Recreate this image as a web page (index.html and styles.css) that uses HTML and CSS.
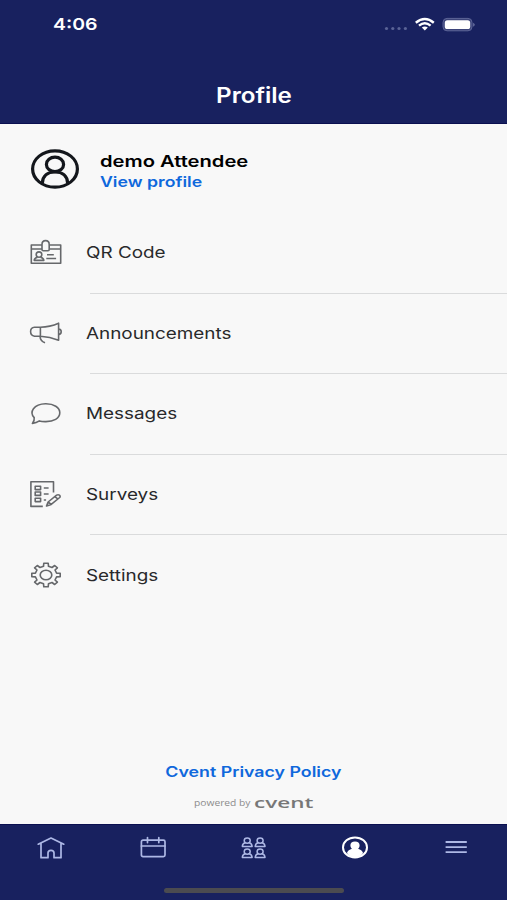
FILE: index.html
```html
<!DOCTYPE html>
<html lang="en">
<head>
<meta charset="utf-8">
<title>Profile</title>
<link rel="stylesheet" href="styles.css">
</head>
<body>
<div class="app">
  <header class="header">
    <div class="status">
      <span class="time wide">4:06</span>
      <svg class="signals" width="92" height="16" viewBox="0 0 92 16">
        <g fill="#5a6396"><circle cx="3.5" cy="12.5" r="1.6"/><circle cx="9.8" cy="12.5" r="1.6"/><circle cx="16" cy="12.5" r="1.6"/><circle cx="22.4" cy="12.5" r="1.6"/></g>
        <g fill="none" stroke="#fff" stroke-width="2.4"><path d="M32.8 6.7Q41.8-.7 50.8 6.7M36 9.7Q41.8 4.9 47.6 9.7"/></g>
        <path fill="#fff" d="M38.8 11.6Q41.8 9.2 44.8 11.6L41.8 14.5Z"/>
        <rect x="60" y="2.4" width="29" height="12.4" rx="4" fill="#3c447a" stroke="#5d6598" stroke-width="1"/>
        <rect x="61.8" y="4.2" width="25.4" height="8.8" rx="2.6" fill="#fff"/>
        <path d="M90.2 6.8q3 2 0 4z" fill="#6c74a2"/>
      </svg>
    </div>
    <h1 class="title wide">Profile</h1>
  </header>

  <main class="content">
    <section class="user">
      <svg class="avatar" width="50" height="42" viewBox="0 0 50 42" fill="none" stroke="#14171c">
        <ellipse cx="25" cy="21" rx="22.4" ry="18.2" stroke-width="3.2"/>
        <ellipse cx="25" cy="16.4" rx="8.6" ry="7.2" stroke-width="3.2"/>
        <path d="M12.3 35.4C12.6 27.5 17.8 24 25 24s12.4 3.5 12.7 11.4" stroke-width="3.2"/>
      </svg>
      <div class="who">
        <span class="name wide">demo Attendee</span>
        <a class="view wide">View profile</a>
      </div>
    </section>

    <nav class="menu">
      <a class="row">
        <svg class="icon" viewBox="0 0 34 30"><path d="M12.8 8H2.3v18.3h29.4V8H20.2M2.3 12h10.5M20.2 12h11.5M13 12.6V7.4q0-3.8 3.6-3.8t3.6 3.8v5.2q0 1.200-1.200 1.200h-4.800Q13 13.800 13 12.600ZM18 17.700h6.800M17.300 21.500h9.800"/><ellipse cx="10" cy="17.600" rx="2.800" ry="2.700"/><path d="M8.500 20.200Q5.300 21 5.200 23.400h9.600q-.1-2.400-3.300-3.200"/></svg>
        <span class="label wide">QR Code</span>
      </a>
      <a class="row">
        <svg class="icon" viewBox="0 0 34 30"><path d="M11.4 9.200H5.500Q1.600 9.500 1.600 13.500t3.900 4.700h5.900ZM11.400 9.200Q21 9 29.600 5.200v17q-8.600-3.400-18.200-4M29.600 11q2.600.2 2.600 2.800t-2.600 2.800M11 18.200q.2 4.700 5 6.600"/></svg>
        <span class="label wide">Announcements</span>
      </a>
      <a class="row">
        <svg class="icon" viewBox="0 0 34 30"><path d="M5.200 19.600C0 14.200 4.600 6 16.600 5.800 24.800 5.700 30.800 9.300 30.800 14.800s-6.200 9-14.600 8.800q-3.600-.1-5.800-.7-3 2.100-7 2.500 2.300-2.700 1.800-5.800Z"/></svg>
        <span class="label wide">Messages</span>
      </a>
      <a class="row">
        <svg class="icon" viewBox="0 0 34 30"><path d="M24.500 13.600V2.800H1.900v24.600H13.800M6.200 7.200h5.400v3.400H6.200zM6.200 13h5.400v3.400H6.200zM6.200 19.200h5.400v3.400H6.200zM14.800 9h4.800M14.800 15h4.800M14.800 21h2.300M17.500 27l1.600-4 8.500-6.800q1.500-1 2.800 0t.3 2.300l-8.500 6.900ZM25.800 17.600l3.300 2.600M19.100 23l3.100 2.400"/></svg>
        <span class="label wide">Surveys</span>
      </a>
      <a class="row">
        <svg class="icon" viewBox="-17 -15 34 30"><path d="M-2.200-11.800H2.200L2.500-8.700 6-7.500 8.700-9.500 11.400-7.200 9-5 10.600-1.900 14.200-1.700V1.700L10.600 1.900 9 5 11.400 7.200 8.700 9.500 6 7.500 2.500 8.700 2.200 11.800H-2.200L-2.500 8.700-6 7.500-8.700 9.500-11.400 7.200-9 5-10.600 1.900-14.200 1.700V-1.700L-10.600-1.900-9-5-11.400-7.200-8.700-9.500-6-7.500-2.500-8.700Z"/><ellipse rx="5.800" ry="4.800"/></svg>
        <span class="label wide">Settings</span>
      </a>
    </nav>

    <footer class="legal">
      <a class="privacy wide">Cvent Privacy Policy</a>
      <div class="powered">
        <span class="by wide">powered by</span>
        <span class="brand wide">cvent</span>
      </div>
    </footer>
  </main>

  <nav class="tabs">
    <div class="tablist">
      <svg class="tab" viewBox="0 0 30 26"><path d="M2.200 9.200 15 3l12.800 6.200M5 8.200v14.500h7V18q0-2.700 3-2.700t3 2.700v4.700h7V8.200"/></svg>
      <svg class="tab" viewBox="0 0 30 26"><rect x="4.400" y="5.200" width="23.600" height="16.400" rx="1.600"/><path d="M4.400 11H28M10.500 2.600v5M21.800 2.600v5"/></svg>
      <svg class="tab people" viewBox="0 0 30 26">
        <g id="person"><ellipse cx="9.200" cy="5.600" rx="3" ry="2.700"/><path d="M7.200 7.800Q4.500 8.600 4.300 11.400h9.800Q13.900 8.600 11.200 7.800"/></g>
        <use href="#person" x="12.900"/><use href="#person" y="11"/><use href="#person" x="12.900" y="11"/>
      </svg>
      <svg class="tab active" viewBox="0 0 30 26"><ellipse cx="15" cy="12.400" rx="12" ry="10" stroke-width="2"/><path class="solid" d="M15 6.400c3 0 4.600 1.600 4.600 3.800 0 1.500-.5 2.700-1.500 3.500 2.400.7 4.200 2.200 5 4.300Q19.900 22.400 15 22.400T6.900 18c.8-2.100 2.600-3.600 5-4.300-1-.8-1.500-2-1.500-3.500 0-2.200 1.600-3.800 4.600-3.800Z"/></svg>
      <svg class="tab burger" viewBox="0 0 30 26"><path d="M4.600 7h21.200M4.600 12.100h21.200M4.600 17.100h21.200"/></svg>
    </div>
    <div class="home-bar"></div>
  </nav>
</div>
</body>
</html>
```

FILE: styles.css
```css
* { box-sizing: border-box; }
body { margin: 0; font-family: Inter, "Liberation Sans", sans-serif; background: #f8f8f8; }
.app { display: flex; flex-direction: column; width: 507px; height: 900px; overflow: hidden; }
.wide { display: block; width: max-content; white-space: nowrap; transform: scaleX(1.2); transform-origin: left center; }

.header { height: 124px; flex: none; background: #18215f; color: #fff; border-bottom: 1px solid #0b1050; }
.status { display: flex; justify-content: space-between; align-items: center; height: 48px; padding: 0 32px 0 53px; }
.time { font-size: 16.5px; font-weight: 600; line-height: 20px; transform: scaleX(1.18); }
.title { margin: 35px auto 0; font-size: 21px; font-weight: 600; line-height: 26px; transform: scaleX(1.15); transform-origin: center; }

.content { flex: 1; display: flex; flex-direction: column; }
.user { display: flex; align-items: center; height: 88px; padding: 2px 0 0 30px; gap: 20px; }
.who { display: flex; flex-direction: column; padding-top: 4px; }
.name { font-size: 16px; font-weight: 600; line-height: 21px; color: #000; transform: scaleX(1.26); }
.view { font-size: 14.5px; font-weight: 600; line-height: 20px; color: #0f68dc; transform: scaleX(1.22); }

.row { display: flex; align-items: center; height: 80.6px; padding-left: 29px; position: relative; }
.row:not(:last-child)::after { content: ""; position: absolute; left: 90px; right: 0; bottom: -1px; height: 1px; background: #dadbdc; }
.icon { width: 34px; height: 30px; margin-right: 23px; fill: none; stroke: #66686b; stroke-width: 1.6; stroke-linejoin: round; }
.label { font-size: 16px; line-height: 22px; color: #28292b; transform: scaleX(1.18); }

.legal { margin-top: auto; padding-bottom: 13px; }
.privacy { margin: 0 auto; font-size: 14px; font-weight: 600; line-height: 18px; color: #0f68dc; transform: scaleX(1.27); transform-origin: center; }
.powered { display: flex; align-items: center; height: 18px; margin-top: 12px; padding-left: 194px; }
.by { width: 60px; font-size: 9px; color: #8c8c8c; font-family: "Open Sans", sans-serif; transform: scaleX(1.14); }
.brand { font-size: 15px; font-weight: 600; line-height: 18px; padding-bottom: 1px; color: #777; font-family: "Open Sans", sans-serif; transform: scaleX(1.5); }

.tabs { height: 76px; flex: none; background: #18215f; border-top: 1px solid #0b1050; }
.tablist { display: flex; justify-content: space-around; height: 63px; padding-top: 10px; }
.tab { width: 30px; height: 26px; fill: none; stroke: #adb8e5; stroke-width: 1.7; stroke-linejoin: round; stroke-linecap: round; }
.people { stroke-width: 1.5; }
.active { stroke: #fff; }
.solid { fill: #fff; stroke: none; }
.burger { stroke-linecap: butt; stroke-width: 1.8; }
.home-bar { width: 180px; height: 5px; margin: 0 auto; border-radius: 3px; background: #4b4b50; }
```
